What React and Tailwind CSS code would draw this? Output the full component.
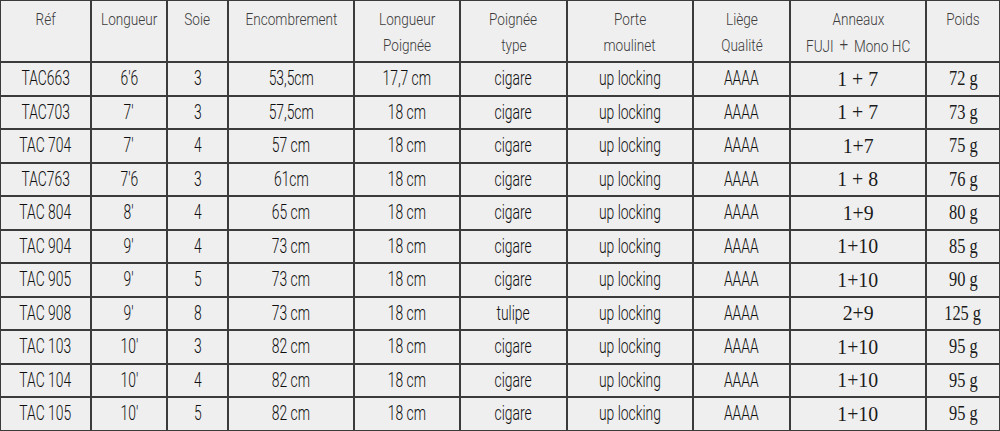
import React from "react";

const headers = [
    ["Réf"],
    ["Longueur"],
    ["Soie"],
    ["Encombrement"],
    ["Longueur", "Poignée"],
    ["Poignée", "type"],
    ["Porte", "moulinet"],
    ["Liège", "Qualité"],
    ["Anneaux", "FUJI + Mono HC"],
    ["Poids"],
];

const rows = [
    ["TAC663", "6'6", "3", "53,5cm", "17,7 cm", "cigare", "up locking", "AAAA", "1 + 7", "72 g"],
    ["TAC703", "7'", "3", "57,5cm", "18 cm", "cigare", "up locking", "AAAA", "1 + 7", "73 g"],
    ["TAC 704", "7'", "4", "57 cm", "18 cm", "cigare", "up locking", "AAAA", "1+7", "75 g"],
    ["TAC763", "7'6", "3", "61cm", "18 cm", "cigare", "up locking", "AAAA", "1 + 8", "76 g"],
    ["TAC 804", "8'", "4", "65 cm", "18 cm", "cigare", "up locking", "AAAA", "1+9", "80 g"],
    ["TAC 904", "9'", "4", "73 cm", "18 cm", "cigare", "up locking", "AAAA", "1+10", "85 g"],
    ["TAC 905", "9'", "5", "73 cm", "18 cm", "cigare", "up locking", "AAAA", "1+10", "90 g"],
    ["TAC 908", "9'", "8", "73 cm", "18 cm", "tulipe", "up locking", "AAAA", "2+9", "125 g"],
    ["TAC 103", "10'", "3", "82 cm", "18 cm", "cigare", "up locking", "AAAA", "1+10", "95 g"],
    ["TAC 104", "10'", "4", "82 cm", "18 cm", "cigare", "up locking", "AAAA", "1+10", "95 g"],
    ["TAC 105", "10'", "5", "82 cm", "18 cm", "cigare", "up locking", "AAAA", "1+10", "95 g"],
];

function HeaderLine({text}) {
    // le "+" de l'en-tête est plus large, comme un signe mathématique
    if (text.includes("+")) {
        const [a, b] = text.split("+");
        return (
            <span className="inline-block whitespace-nowrap scale-x-[0.8]">
                {a.trim()}
                <span className="mx-[7px] font-['Liberation_Serif',serif] text-[20px]">+</span>
                {b.trim()}
            </span>
        );
    }
    return <span className="inline-block whitespace-nowrap scale-x-[0.8]">{text}</span>;
}

function HeaderCell({lines}) {
    return (
        <div className="bg-[#efefef] pt-[5px] text-center text-[17px] leading-[26px] font-light text-[#3c3c3c] font-['Roboto',sans-serif]">
            {lines.map((l, i) => (
                <div key={i}>
                    <HeaderLine text={l}/>
                </div>
            ))}
        </div>
    );
}

function BodyCell({value, col}) {
    // la colonne anneaux et le poids sont dans une police à empattements
    if (col === 8) {
        return (
            <div className="flex items-center justify-center bg-[#efefef] text-[22px] leading-none text-[#1a1a1a] font-['Liberation_Serif',serif]">
                <span className="inline-block whitespace-nowrap scale-x-[0.9]">{value}</span>
            </div>
        );
    }
    if (col === 9) {
        return (
            <div className="flex items-center justify-center bg-[#efefef] text-[21px] leading-none text-[#1a1a1a] font-['Liberation_Serif',serif]">
                <span className="inline-block whitespace-nowrap scale-x-[0.78]">{value}</span>
            </div>
        );
    }
    return (
        <div className="flex items-center justify-center bg-[#efefef] text-[21px] leading-none font-light text-[#0e0e0e] font-['Roboto',sans-serif]">
            <span className="inline-block whitespace-nowrap scale-x-[0.66]">{value}</span>
        </div>
    );
}

export default function App() {
    return (
        <div className="w-[1000px] h-[431px] bg-[#3b3b3b] pt-[1px] px-[1px] pb-[1.5px] overflow-hidden">
            <div className="grid gap-[2px] grid-cols-[89px_74px_59px_124px_104px_105px_124px_95px_134px_72px] grid-rows-[60px_repeat(11,31.5px)]">
                {headers.map((h, i) => (
                    <HeaderCell key={i} lines={h}/>
                ))}
                {rows.map((r, ri) =>
                    r.map((v, ci) => <BodyCell key={ri + "-" + ci} value={v} col={ci}/>)
                )}
            </div>
        </div>
    );
}
